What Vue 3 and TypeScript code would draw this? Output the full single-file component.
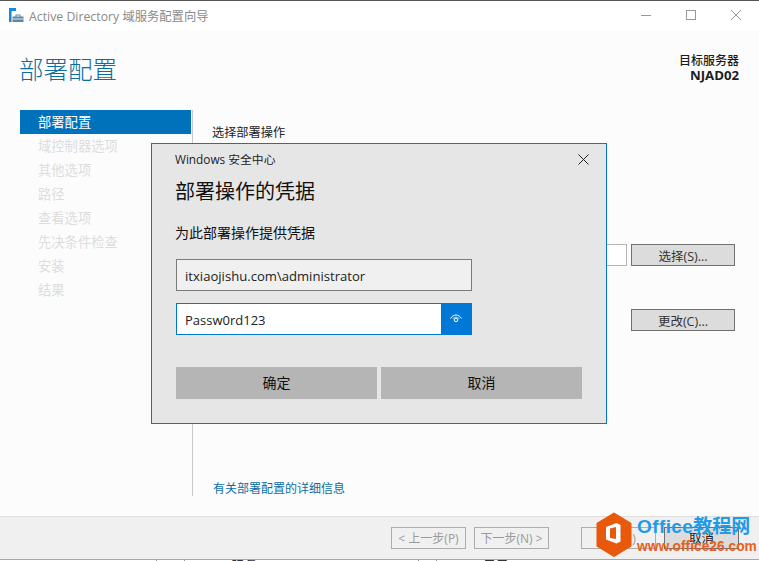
<script setup lang="ts">
const steps: string[] = ['部署配置', '域控制器选项', '其他选项', '路径', '查看选项', '先决条件检查', '安装', '结果']
</script>

<template>
  <div class="screen">
    <div class="topline"></div>
    <header class="titlebar">
      <svg class="appicon" width="16" height="16" viewBox="0 0 16 16">
        <rect x="0" y="0" width="7" height="3" fill="#1a86dc" />
        <rect x="0" y="3" width="2.500" height="11" fill="#1a86dc" />
        <path d="M3.500 8.500h3V6.500h5V8.500h3V14h-11z" fill="#5f87a3" />
        <rect x="3.500" y="10.500" width="11" height="1" fill="#dfe8ee" />
        <rect x="7.500" y="7.500" width="3" height="1" fill="#fff" />
      </svg>
      <span class="apptitle">Active Directory 域服务配置向导</span>
      <span class="winbtns">
        <svg width="10" height="10" viewBox="0 0 10 10"><path d="M0 5.500h10" stroke="#999" fill="none" /></svg>
        <svg width="10" height="10" viewBox="0 0 10 10"><rect x=".5" y=".5" width="9" height="9" stroke="#999" fill="none" /></svg>
        <svg width="10" height="10" viewBox="0 0 10 10"><path d="M0 0l10 10M10 0L0 10" stroke="#999" fill="none" /></svg>
      </span>
    </header>

    <section class="wizard">
      <div class="headrow">
        <h1>部署配置</h1>
        <div class="target">目标服务器<br /><b>NJAD02</b></div>
      </div>
      <div class="mainrow">
        <nav class="steps">
          <div v-for="(s, i) in steps" :key="s" class="step" :class="{ active: i === 0 }">{{ s }}</div>
        </nav>
        <div class="pane">
          <p class="panelabel">选择部署操作</p>
          <div class="row first"><span class="ghostinput"></span><button class="winbtn">选择(S)...</button></div>
          <div class="row second"><button class="winbtn">更改(C)...</button></div>
          <a class="more">有关部署配置的详细信息</a>
        </div>
      </div>
    </section>

    <footer class="footer">
      <button class="navbtn">&lt; 上一步(P)</button>
      <button class="navbtn next">下一步(N) &gt;</button>
      <button class="navbtn install">安装(I)</button>
      <button class="winbtn cancel">取消</button>
    </footer>
    <div class="under"><span>服务</span><span class="u2">目录</span><i></i><i class="l2"></i><i class="l3"></i><i class="l4"></i></div>

    <div class="dialog">
      <div class="dlg-top"><span>Windows 安全中心</span>
        <svg width="11" height="11" viewBox="0 0 11 11"><path d="M.5.500l10 10M10.500.500l-10 10" stroke="#222" fill="none" /></svg>
      </div>
      <h2>部署操作的凭据</h2>
      <p class="prompt">为此部署操作提供凭据</p>
      <div class="field user">itxiaojishu.com\administrator</div>
      <div class="pw">
        <span class="pwtext">Passw0rd123</span>
        <span class="eye">
          <svg width="14" height="12" viewBox="0 0 14 12">
            <path d="M1.500 5.500C3 3.200 5 2 7 2s4 1.200 5.500 3.500" stroke="#fff" fill="none" stroke-width="1" />
            <path d="M3.600 6C4.500 4.800 5.700 4.200 7 4.200S9.500 4.800 10.400 6" stroke="#cfe4f7" fill="none" stroke-width=".8" />
            <circle cx="7" cy="7" r="1.800" stroke="#fff" fill="none" stroke-width="1" />
          </svg>
        </span>
      </div>
      <div class="dlg-btns"><button>确定</button><button>取消</button></div>
    </div>

    <div class="watermark">
      <svg width="36" height="46" viewBox="0 0 36 46">
        <path d="M18 1.500L34.500 11.500V34L18 44 1.500 34V11.500z" fill="#e8590c" stroke="#e8590c" stroke-width="2" stroke-linejoin="round" />
        <path d="M10 15L20.500 11l4 2v16.500l-4 2L10 27.500zM14 16.500v9.500l6 1V15z" fill="#fff" fill-rule="evenodd" />
      </svg>
      <div class="wmtext">
        <span class="wm1"><span class="wmlatin">Office</span>教程网</span>
        <span class="wm2">www.office26.com</span>
      </div>
    </div>
  </div>
</template>

<style>
html, body { margin: 0; padding: 0; background: #fff; }
</style>

<style scoped>
.screen {
  position: relative;
  width: 759px;
  height: 561px;
  overflow: hidden;
  display: flex;
  flex-direction: column;
  background: #fff;
  font-family: "Open Sans", "Noto Sans CJK SC", sans-serif;
  font-size: 13px;
  color: #222;
}
.topline { height: 1px; background: #555; flex: none; }
.titlebar {
  height: 30px;
  flex: none;
  display: flex;
  align-items: center;
  padding-left: 9px;
  background: #fff;
}
.appicon { margin-right: 4px; }
.apptitle { font-size: 12.300px; color: #8a8a8a; }
.winbtns {
  margin-left: auto;
  display: flex;
  align-items: center;
  gap: 35px;
  padding: 0 18px 2px 0;
}
.wizard {
  flex: 1;
  min-height: 0;
  display: flex;
  flex-direction: column;
  background: #fcfcfc;
}
.headrow {
  display: flex;
  justify-content: space-between;
  height: 79px;
  flex: none;
  padding: 0 20px;
}
h1 {
  margin: 23px 0 0 -1px;
  font-size: 24.500px;
  line-height: 32px;
  font-weight: 300;
  color: #0a6e9c;
}
.target {
  margin-top: 22px;
  text-align: right;
  font-size: 12px;
  line-height: 15px;
  font-weight: 500;
  color: #1c1c1c;
}
.target b { font-size: 13.200px; font-weight: 700; }
.mainrow { flex: 1; display: flex; padding-left: 20px; min-height: 0; }
.steps {
  width: 173px;
  box-sizing: border-box;
  flex: none;
  height: 386px;
  margin-right: 19px;
  padding-right: 1px;
  border-right: 1px solid #c8c8c8;
}
.step {
  height: 24px;
  line-height: 24px;
  padding-left: 18px;
  font-size: 13.300px;
  color: #dcdcdc;
}
.step.active { background: #0072bc; color: #fff; }
.pane { flex: 1; position: relative; padding-right: 24px; }
.panelabel { margin: 14px 0 0; font-size: 12.200px; line-height: 18px; color: #222; }
.row { display: flex; justify-content: flex-end; align-items: center; }
.first { margin-top: 102px; gap: 4px; }
.second { margin-top: 43px; }
.ghostinput {
  width: 20px;
  height: 20px;
  border: 1px solid #b4b4b4;
  background: #fff;
}
.winbtn {
  width: 104px;
  height: 22px;
  box-sizing: border-box;
  border: 1px solid #707070;
  background: #dcdcdc;
  padding: 0;
  font: inherit;
  font-size: 12.500px;
  color: #333;
}
.more {
  display: block;
  margin: 150px 0 0 1px;
  font-size: 12px;
  line-height: 16px;
  color: #0a6ea8;
}
.footer {
  height: 43px;
  flex: none;
  box-sizing: border-box;
  border-top: 1px solid #dfdfdf;
  background: #f0f0f0;
  display: flex;
  justify-content: flex-end;
  align-items: center;
  padding: 0 20px 0 0;
}
.navbtn {
  width: 75px;
  height: 22px;
  box-sizing: border-box;
  border: 1px solid #adadad;
  background: #f0f0f0;
  padding: 0;
  font: inherit;
  font-size: 12px;
  color: #9a9a9a;
}
.next { margin-left: 8px; }
.install { margin-left: 32px; }
.cancel { width: 75px; margin-left: 8px; padding-bottom: 3px; color: #222; }
.under {
  position: relative;
  height: 1px;
  flex: none;
  border-top: 1px solid #a6a6a6;
  background: #fff;
  overflow: hidden;
  font-size: 13px;
  line-height: 16px;
  color: #333;
}
.under span { position: absolute; left: 231px; top: -3px; }
.under .u2 { left: 483px; }
.under i { position: absolute; top: 0; bottom: 0; left: 156px; width: 1px; background: #999; }
.under .l2 { left: 184px; }
.under .l3 { left: 418px; }
.under .l4 { left: 436px; }

.dialog {
  position: absolute;
  left: 151px;
  top: 143px;
  width: 456px;
  height: 281px;
  box-sizing: border-box;
  border: 1px solid #0078d7;
  background: #e6e6e6;
  padding: 0 24px;
  display: flex;
  flex-direction: column;
}
.dlg-top {
  display: flex;
  justify-content: space-between;
  align-items: center;
  height: 30px;
  margin-left: -1px;
  font-size: 11.800px;
  color: #222;
}
.dlg-top span { margin-top: -1px; }
.dlg-top svg { margin-right: -7px; }
h2 {
  margin: 4px 0 0 -1px;
  font-size: 20px;
  line-height: 28px;
  font-weight: 400;
  color: #111;
}
.prompt { margin: 17px 0 0 -1px; font-size: 14px; line-height: 20px; color: #111; }
.field {
  width: 296px;
  height: 32px;
  margin-top: 16px;
  box-sizing: border-box;
  border: 1px solid #7a7a7a;
  background: #f0f0f0;
  padding: 1px 0 0 8px;
  line-height: 30px;
  font-size: 13.100px;
  color: #222;
}
.pw {
  width: 296px;
  height: 32px;
  margin-top: 12px;
  box-sizing: border-box;
  border: 1px solid #0078d7;
  background: #fff;
  display: flex;
  justify-content: space-between;
}
.pwtext { padding: 1px 0 0 8px; line-height: 30px; font-size: 13px; color: #222; }
.eye {
  width: 30px;
  background: #0078d7;
  display: flex;
  align-items: center;
  justify-content: center;
}
.dlg-btns { display: flex; gap: 4px; margin-top: 32px; }
.dlg-btns button {
  width: 201px;
  height: 32px;
  border: 0;
  padding: 0 0 2px;
  background: #b5b5b5;
  font: inherit;
  font-size: 14px;
  color: #111;
}
.watermark {
  position: absolute;
  left: 596px;
  top: 512px;
  display: flex;
  gap: 5px;
}
.wmtext { display: flex; flex-direction: column; padding-top: 2px; }
.wm1 {
  font-family: "Liberation Sans", "Noto Sans CJK SC", sans-serif;
  font-size: 19px;
  line-height: 26px;
  font-weight: 700;
  color: #1f9be8;
  white-space: nowrap;
}
.wmlatin { letter-spacing: .4px; }
.wm2 {
  font-family: "Liberation Sans", sans-serif;
  font-size: 13.800px;
  line-height: 14px;
  font-weight: 700;
  color: #e8601a;
  white-space: nowrap;
}
</style>
